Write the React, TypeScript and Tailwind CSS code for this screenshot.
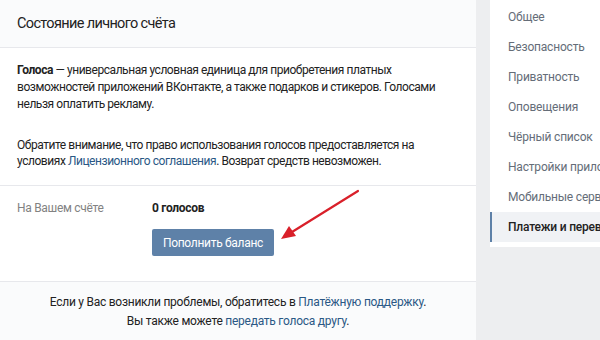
import React from "react";

const items = [
  "Общее",
  "Безопасность",
  "Приватность",
  "Оповещения",
  "Чёрный список",
  "Настройки приложений",
  "Мобильные сервисы",
  "Платежи и переводы",
];

export default function App() {
  return (
    <div
      className="relative w-[600px] h-[340px] bg-[#edeef0] overflow-hidden flex"
      style={{ fontFamily: "Roboto, 'Open Sans', sans-serif" }}
    >
      <div className="w-[476px] h-full bg-white flex flex-col shrink-0">
        <div className="h-[48px] bg-[#fafbfc] border-b border-[#e7e8ec] flex items-center pl-[17px] shrink-0">
          <span className="text-[14.5px] tracking-[-0.65px] text-[#222]">Состояние личного счёта</span>
        </div>
        <div className="pl-[17px] pr-[20px] pt-[14px] text-[12px] tracking-[-0.45px] leading-[17px] text-[#222]">
          <p>
            <b className="font-bold">Голоса</b> — универсальная условная единица для приобретения платных
            <br />
            возможностей приложений ВКонтакте, а также подарков и стикеров. Голосами
            <br />
            нельзя оплатить рекламу.
          </p>
          <p className="mt-[24px] leading-[16px]">
            Обратите внимание, что право использования голосов предоставляется на
            <br />
            условиях <span className="text-[#2a5885]">Лицензионного соглашения</span>. Возврат средств невозможен.
          </p>
        </div>
        <div className="mt-[16px] border-t border-[#e7e8ec] h-[96px] shrink-0 px-[17px] pt-[14px] text-[12px] tracking-[-0.3px]">
          <div className="flex h-[16px] items-center">
            <span className="w-[135px] text-[#828282]">На Вашем счёте</span>
            <span className="font-bold text-[#222]">0 голосов</span>
          </div>
          <div className="pl-[135px] mt-[13px]">
            <button className="w-[122px] h-[27px] bg-[#5e81a8] rounded-[2px] text-white text-[12px] tracking-[-0.3px]">
              Пополнить баланс
            </button>
          </div>
        </div>
        <div className="flex-1 bg-[#fafbfc] border-t border-[#e7e8ec] text-center text-[12px] tracking-[-0.25px] leading-[19px] text-[#222] pt-[11px]">
          <p>
            Если у Вас возникли проблемы, обратитесь в{" "}
            <span className="text-[#2a5885]">Платёжную поддержку</span>.
          </p>
          <p>
            Вы также можете <span className="text-[#2a5885]">передать голоса другу</span>.
          </p>
        </div>
      </div>
      <div className="ml-[14px] w-[110px] self-start bg-white shrink-0 overflow-hidden pt-[2px] pb-[5px]">
        {items.map((t, i) => {
          const sel = i === items.length - 1;
          return (
            <div
              key={t}
              className={
                sel
                  ? "h-[30px] flex items-center pl-[16px] whitespace-nowrap text-[12px] tracking-[-0.2px] bg-[#f0f2f5] border-l-2 border-[#5e81a8] text-[#222] font-medium"
                  : "h-[30px] flex items-center pl-[18px] whitespace-nowrap text-[12px] tracking-[-0.2px] text-[#656d78]"
              }
            >
              {t}
            </div>
          );
        })}
      </div>
      <svg className="absolute left-0 top-0" width="600" height="340" viewBox="0 0 600 340">
        <line x1="358" y1="191" x2="292" y2="232" stroke="#d9202a" strokeWidth="2.2" strokeLinecap="round" />
        <polygon points="281,239 289,226 296,236" fill="#d9202a" />
      </svg>
    </div>
  );
}
